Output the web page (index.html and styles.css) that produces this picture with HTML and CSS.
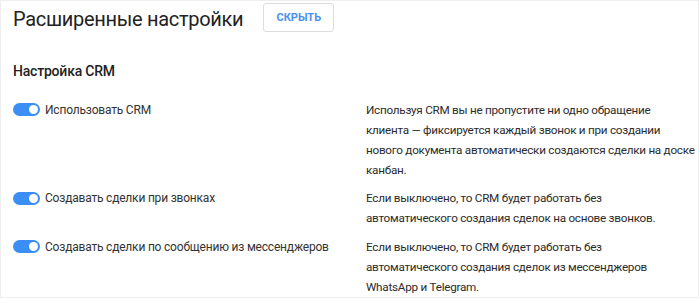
FILE: index.html
```html
<!DOCTYPE html>
<html lang="ru">
<head>
    <meta charset="UTF-8">
    <meta name="viewport" content="width=device-width, initial-scale=1.0">
    <title>Расширенные настройки</title>
    <link rel="stylesheet" href="styles.css">
</head>
<body>
    <div class="panel">
        <div class="header">
            <h1>Расширенные настройки</h1>
            <button class="hide-btn">СКРЫТЬ</button>
        </div>

        <h2>Настройка CRM</h2>

        <div class="settings">
            <div class="row">
                <label class="option">
                    <span class="toggle on"></span>
                    Использовать CRM
                </label>
                <p class="desc">Используя CRM вы не пропустите ни одно обращение<br>клиента — фиксируется каждый звонок и при создании<br>нового документа автоматически создаются сделки на доске<br>канбан.</p>
            </div>
            <div class="row">
                <label class="option">
                    <span class="toggle on"></span>
                    Создавать сделки при звонках
                </label>
                <p class="desc">Если выключено, то CRM будет работать без<br>автоматического создания сделок на основе звонков.</p>
            </div>
            <div class="row">
                <label class="option">
                    <span class="toggle on"></span>
                    Создавать сделки по сообщению из мессенджеров
                </label>
                <p class="desc">Если выключено, то CRM будет работать без<br>автоматического создания сделок из мессенджеров<br>WhatsApp и Telegram.</p>
            </div>
        </div>
    </div>
</body>
</html>
```

FILE: styles.css
```css
body {
    margin: 0;
    font-family: Roboto, "Liberation Sans", sans-serif;
    color: #333;
    background: #fff;
}
.panel {
    width: 697px;
    height: 296px;
    border: 1px solid #eee;
    overflow: hidden;
}
.header {
    display: flex;
    align-items: center;
    gap: 20px;
    padding: 2px 12px 0;
}
h1 {
    margin: 3px 0 0;
    font-size: 20px;
    font-weight: 400;
    letter-spacing: -0.3px;
    color: #222;
}
.hide-btn {
    width: 71px;
    height: 29px;
    background: #fff;
    border: 1px solid #ddd;
    border-radius: 3px;
    color: #4a90f0;
    font-family: inherit;
    font-size: 11px;
    font-weight: 700;
    cursor: pointer;
}
h2 {
    margin: 31px 0 0 12px;
    font-size: 14px;
    font-weight: 500;
    letter-spacing: -0.2px;
    color: #222;
}
.settings {
    display: flex;
    flex-direction: column;
    gap: 8.5px;
    margin-top: 20.5px;
    padding-left: 12px;
}
.row {
    display: grid;
    grid-template-columns: 353px 332px;
}
.option {
    display: flex;
    align-items: center;
    gap: 5px;
    height: 20px;
    font-size: 12px;
    letter-spacing: -0.2px;
    white-space: nowrap;
    color: #333;
}
.toggle {
    position: relative;
    flex: none;
    width: 27px;
    height: 13px;
    border-radius: 7px;
    background: #ccc;
}
.toggle.on {
    background: #3b8ef3;
}
.toggle::after {
    content: "";
    position: absolute;
    top: 2px;
    left: 2px;
    width: 9px;
    height: 9px;
    border-radius: 50%;
    background: #fff;
}
.toggle.on::after {
    left: 16px;
}
.desc {
    margin: 0;
    font-size: 11.7px;
    letter-spacing: -0.25px;
    line-height: 20px;
    white-space: nowrap;
    color: #2b2b2b;
}
```
